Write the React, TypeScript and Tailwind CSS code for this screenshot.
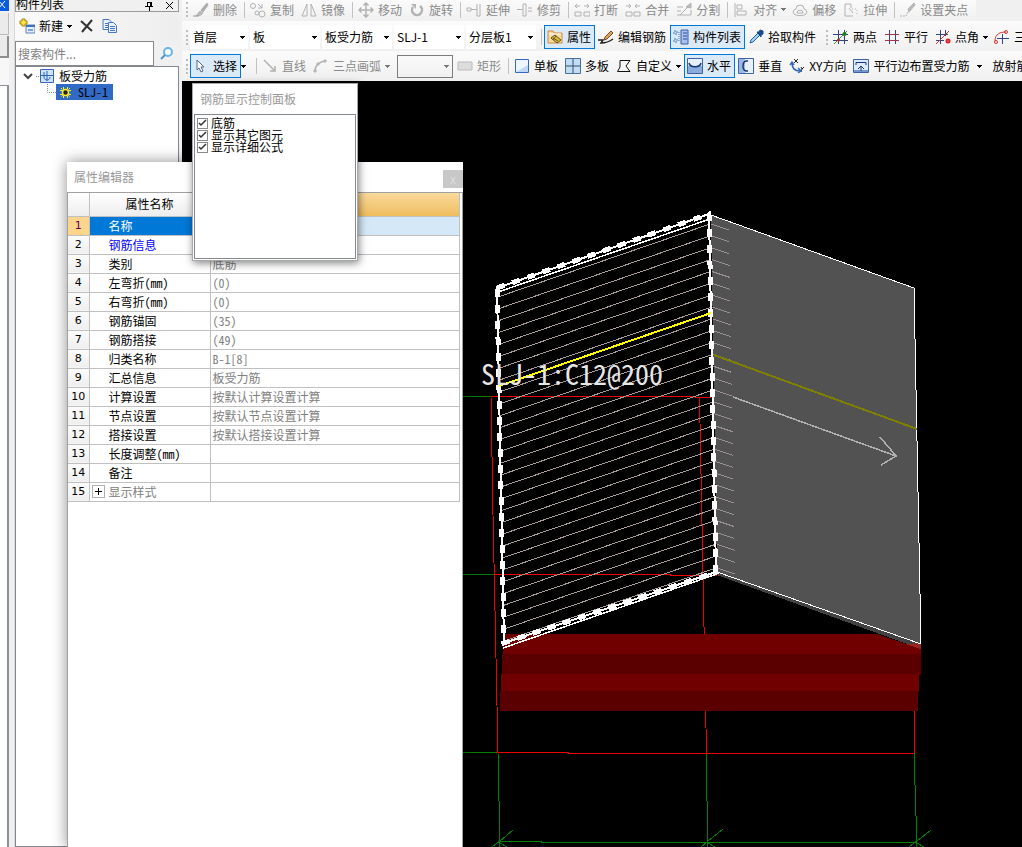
import { ReactNode } from 'react';

type IconName = keyof typeof icons;

const icons = {
    brush: <><path d="M14 1 8 8l2 2 5-7z" fill="#aaa" /><path d="m7 9-4 5 5-1 2-2z" fill="#bbb" /><path d="M0 14h6" stroke="#999" /></>,
    copyShape: <><circle cx="3" cy="4" r="2.500" /><circle cx="7" cy="11" r="2" /><circle cx="12" cy="12" r="3" /><path d="M8 2l4 4m0-4v4H8" /></>,
    mirror: <><path d="M6 2v12H1zM10 2v12h5z" /></>,
    move: <><path d="M8 1v14M1 8h14M5.500 3.500 8 1l2.500 2.500M5.500 12.500 8 15l2.500-2.500M3.500 5.500 1 8l2.500 2.500M12.500 5.500 15 8l-2.500 2.500" strokeWidth="1.500" /></>,
    rotate: <><path d="M4 5a5 5 0 1 0 7-1" strokeWidth="2.500" /><path d="M2 2h5v5z" fill="#b5b5b5" stroke="none" /></>,
    extend: <><path d="M1 6h4v3H1zM5 7.500h6M11 2v12h3V2" /></>,
    trim: <><path d="M6 2h3v12H6zM0 7.500h6M11 6h4M11 9h4" /></>,
    breakLine: <><path d="M1 10h6v4H1zM10 10h6v4h-6zM1 4h5M10 4h5M3 2 1 4l2 2M13 2l2 2-2 2" /></>,
    join: <><path d="M1 10h6v4H1zM9 10h6v4H9zM1 4h5M10 4h5M4 2l2 2-2 2M12 2l-2 2 2 2" /></>,
    split: <><path d="M1 5h6M1 9h4M1 13h14V8M4 13 15 2" /><path d="M10 5l5-4v5z" fill="#bbb" /></>,
    align: <><path d="M2 1v14M4 3h5v4H4zM4 9h9v4H4z" /></>,
    offset: <><path d="M2 12a3 3 0 0 1 2-5 4 4 0 0 1 8 0 3 3 0 0 1 2 5c-2 2-10 2-12 0zM5 11a3 3 0 1 1 6 0z" /></>,
    stretch: <><path d="M2 14V2h6v4M2 14h8" /><path d="M9 7h5v7" strokeDasharray="1 2" /><path d="M6 6l4 5" /></>,
    grip: <><path d="M14 1 8 7l1 3 6-7z" fill="#bbb" /><path d="M0 14h5m3-4-2 4" strokeDasharray="2 1" /></>,
    props: <><path d="M1 2h5l1 2h8v10H1z" fill="#f9d9a0" stroke="#d28a3a" /><path d="M2 5h12" stroke="#fff" /><path d="m4 9 4-3 6 5-4 3z" fill="#e3bd35" stroke="#5b5136" /><path d="m6 9 5 3M9 7l-3 4" stroke="#6b5a20" /></>,
    edit: <><path d="M0 11h5l-2 3c4 0 8-1 12-4" stroke="#222" strokeWidth="1.500" /><path d="m6 11 1-3 6-6 2 2-6 6z" fill="#dca45c" stroke="#7b4a25" /></>,
    list: <><path d="M8 1h7v14H8z" fill="#a9c1ec" stroke="#3a5da8" /><path d="M10 4h4M10 7h4M10 10h4" stroke="#2c4f96" /><path d="M1 2h3v3H1zM1 10h3v3H1z" stroke="#4b74b8" strokeDasharray="2 1" /><path d="M6 3v10" stroke="#4b74b8" strokeDasharray="1 1" /></>,
    picker: <><path d="m3 11 7-7 2 2-7 7-3 1z" fill="#a5cdf0" stroke="#2263a8" /><path d="M9 3l2 0 1-2 3 1v3l-2 1v2z" fill="#174b8e" stroke="#174b8e" /></>,
    twoPoint: <><path d="M5.500 1v14M11.500 1v14M0 5.500h15M0 11.500h15" stroke="#34457d" /><path d="M1 15 14 2" stroke="#3c9a3c" /><circle cx="11.500" cy="5" r="2" fill="#207c20" stroke="none" /><circle cx="5.500" cy="11" r="1.500" fill="#b22" stroke="none" /></>,
    parallel: <><path d="M5.500 1v14M11.500 1v14" stroke="#34457d" /><path d="M1 5.500h14M1 11.500h14" stroke="#a1344e" /></>,
    pointAngle: <><path d="M5.500 1v14M1 5.500h12M1 11.500h8M10.500 1v6" stroke="#34457d" /><path d="M1 15 14 2" stroke="#c33" /><circle cx="13" cy="12" r="1.500" stroke="#d22" strokeWidth="2" /></>,
    arcAxis: <><path d="M1 12C1 5 6 3 12 3" stroke="#d33" /><circle cx="12" cy="3" r="1.500" stroke="#d33" /><circle cx="2" cy="13" r="1.500" stroke="#d33" /><path d="M8.500 5v10M3 9.500h12" stroke="#34457d" /></>,
    cursor: <><path d="M4 2v10l2-2 2 4 2-1-2-4h3z" fill="#fff" stroke="#4f6496" /></>,
    line: <><path d="m2 2 11 11M13 8v5H8" strokeWidth="1.500" /></>,
    arc: <><path d="M2 13C2 7 7 3 13 3" strokeWidth="1.500" /><path d="M1 12h2v2H1zM4 5h2v2H4zM11 2h2v2h-2z" fill="#bbb" /></>,
    rect: <><path d="M1 4h14v8H1z" fill="#ddd" stroke="#bbb" /></>,
    singleSlab: <><path d="M1.500 1.500h13v13h-13z" fill="#edf5ff" stroke="#3669bd" /><path d="M2 14h12V7z" fill="#bcd8f6" stroke="none" /></>,
    multiSlab: <><path d="M.5.5h15v15H.5z" fill="#c3dcf5" stroke="#466f9b" /><path d="M8 1v14M1 8h14" stroke="#31506f" /></>,
    custom: <><path d="M4 2.500h10L10 8l4 5.500H1.500L4 9z" stroke="#111" /></>,
    horizontal: <><path d="M.5.5h15v15H.5z" fill="#8badde" stroke="#3d62a5" /><path d="M1 1h14v7H1z" fill="#e7f0fb" stroke="none" /><path d="M2 5c1 5 11 5 12 0" stroke="#173873" strokeWidth="1.500" /></>,
    vertical: <><path d="M.5.5h15v15H.5z" fill="#9ab9e5" stroke="#3d62a5" /><path d="M7 1h8v14H7z" fill="#e7f0fb" stroke="none" /><path d="M10 3H8C4 4 4 12 8 13h2" stroke="#173873" strokeWidth="1.500" /></>,
    xy: <><path d="M5 1l4 4M9 1 5 5M12 9l1 2 2-2M13 11l-1 3" stroke="#222" /><path d="M3 5c0 5 2 8 8 8M1 7l2-3 2 3M9 10l3 3-3 2" stroke="#3569bb" strokeWidth="1.500" /></>,
    edgeRebar: <><path d="M.5 1.500h15v13H.5z" fill="#dceafa" stroke="#3d62a5" /><path d="M1 12h14v2H1z" fill="#7298d1" stroke="none" /><path d="M3 7V4.500h10V7M8 13V8M5 11l3-3 3 3" stroke="#173873" /></>,
};

function Icon({ name }: { name: IconName }) {
    return (
        <svg className="h-4 w-4 shrink-0" viewBox="0 0 16 16" fill="none" stroke="#b2b2b2" aria-hidden="true">
            {icons[name]}
        </svg>
    );
}

function Caret({ className = 'text-black' }: { className?: string }) {
    return (
        <svg className={`h-[3px] w-[5px] shrink-0 ${className}`} viewBox="0 0 5 3" fill="currentColor" shapeRendering="crispEdges" aria-hidden="true">
            <path d="M0 0h5L2.500 3z" />
        </svg>
    );
}

interface ToolProps {
    icon?: IconName;
    label: string;
    disabled?: boolean;
    active?: boolean;
    arrow?: boolean;
}

function Tool({ icon, label, disabled, active, arrow }: ToolProps) {
    return (
        <>
            <button
                type="button"
                disabled={disabled}
                className={`flex h-6 shrink-0 items-center gap-1 border pr-[3px] pl-[2px] whitespace-nowrap ${active ? 'border-[#0078d7] bg-[#dbeaf7]' : 'border-transparent'} ${disabled ? 'text-[#8a8a8a]' : 'text-black'}`}
            >
                {icon && <Icon name={icon} />}
                {label}
            </button>
            {arrow && (
                <button type="button" disabled={disabled} aria-label={`${label}选项`} className="flex h-6 w-2 shrink-0 items-center">
                    <Caret className={disabled ? 'text-[#777]' : 'text-black'} />
                </button>
            )}
        </>
    );
}

function Separator() {
    return <span className="mr-[2px] ml-[3px] h-4 w-px shrink-0 bg-[#c2c2c2]" />;
}

function Grip() {
    return <span className="mr-[2px] ml-1 h-[15px] w-0 shrink-0 border-l-2 border-dotted border-[#bdbdbd]" />;
}

function Combo({ label, value, className }: { label: string; value: string; className: string }) {
    return (
        <div className={`relative flex h-6 shrink-0 items-center bg-white ${className}`}>
            <select aria-label={label} className="h-full w-full appearance-none bg-transparent px-[3px] text-black outline-none">
                <option>{value}</option>
            </select>
            <span className="pointer-events-none absolute right-[3px]">
                <Caret />
            </span>
        </div>
    );
}

const bar = 'flex shrink-0 items-center bg-gradient-to-b from-[#fbfbfb] to-[#f0f0f0]';

function Toolbars() {
    return (
        <div className="flex shrink-0 flex-col overflow-hidden bg-[#f0f0f0]">
            <div className="flex h-[21px] items-center">
                <div className={`${bar} h-[21px] pr-1 pb-[2px]`}>
                    <Grip />
                    <Tool icon="brush" label="删除" disabled />
                    <Separator />
                    <Tool icon="copyShape" label="复制" disabled />
                    <Tool icon="mirror" label="镜像" disabled />
                    <Separator />
                    <Tool icon="move" label="移动" disabled />
                    <Tool icon="rotate" label="旋转" disabled />
                    <Separator />
                    <Tool icon="extend" label="延伸" disabled />
                    <Tool icon="trim" label="修剪" disabled />
                    <Separator />
                    <Tool icon="breakLine" label="打断" disabled />
                    <Tool icon="join" label="合并" disabled />
                    <Tool icon="split" label="分割" disabled />
                    <Separator />
                    <Tool icon="align" label="对齐" disabled arrow />
                    <Tool icon="offset" label="偏移" disabled />
                    <Tool icon="stretch" label="拉伸" disabled />
                    <Separator />
                    <Tool icon="grip" label="设置夹点" disabled />
                </div>
            </div>
            <div className={`${bar} h-[30px] pt-[2px]`}>
                <Grip />
                <div className="mr-[2px] flex shrink-0 gap-[2px]">
                    <Combo label="楼层" value="首层" className="w-[58px]" />
                    <Combo label="构件类别" value="板" className="w-[70px]" />
                    <Combo label="构件类型" value="板受力筋" className="w-[70px]" />
                    <Combo label="构件" value="SLJ-1" className="w-[70px]" />
                    <Combo label="分层" value="分层板1" className="w-[70px]" />
                </div>
                <Separator />
                <Tool icon="props" label="属性" active />
                <Tool icon="edit" label="编辑钢筋" />
                <Tool icon="list" label="构件列表" active />
                <Tool icon="picker" label="拾取构件" />
                <span className="w-[2px] shrink-0" />
                <Grip />
                <Tool icon="twoPoint" label="两点" />
                <Tool icon="parallel" label="平行" />
                <Tool icon="pointAngle" label="点角" arrow />
                <Tool icon="arcAxis" label="三点辅轴" />
            </div>
            <div className={`${bar} h-[30px]`}>
                <Grip />
                <Tool icon="cursor" label="选择" active arrow />
                <span className="w-1 shrink-0" />
                <Separator />
                <Tool icon="line" label="直线" disabled />
                <Tool icon="arc" label="三点画弧" disabled arrow />
                <div className="relative ml-1 flex h-[23px] w-14 shrink-0 items-center border border-[#7c7c7c]">
                    <select aria-label="画法" disabled className="h-full w-full appearance-none bg-transparent" />
                    <span className="pointer-events-none absolute right-[3px]">
                        <Caret className="text-[#777]" />
                    </span>
                </div>
                <span className="w-px shrink-0" />
                <Tool icon="rect" label="矩形" disabled />
                <Separator />
                <Tool icon="singleSlab" label="单板" />
                <Tool icon="multiSlab" label="多板" />
                <Tool icon="custom" label="自定义" arrow />
                <Tool icon="horizontal" label="水平" active />
                <Tool icon="vertical" label="垂直" />
                <Tool icon="xy" label="XY方向" />
                <Tool icon="edgeRebar" label="平行边布置受力筋" />
                <span className="flex w-4 shrink-0 items-center pl-1">
                    <Caret />
                </span>
                <Tool label="放射筋" />
            </div>
        </div>
    );
}

function DockStrip() {
    return (
        <div className="flex w-[9px] shrink-0 flex-col bg-[#f0f0f0]">
            <div className="flex h-[11px] items-start bg-[#0a5be0]">
                <svg className="h-[11px] w-[9px]" viewBox="0 0 9 11" fill="none" stroke="#fff" aria-hidden="true">
                    <path d="M-1 1l6 7M5 1l-6 7" />
                </svg>
            </div>
            <div className="mt-[2px] h-[22px] border-r border-b border-[#bbb] bg-[#ebebeb]" />
            <div className="mt-px h-[22px] border-r-2 border-b-2 border-[#8d8d8d] bg-[#ebebeb]" />
            <div className="h-[27px] bg-[#f7f7f7]" />
            <div className="flex-1 border-t border-r-2 border-[#8d9094] bg-white" />
        </div>
    );
}

function ComponentList() {
    return (
        <aside className="flex w-[164px] shrink-0 flex-col bg-[#f0f0f0]">
            <div className="flex h-3 items-center justify-between overflow-hidden border-x border-b border-[#9a9a9a] text-black">
                <h2 className="-mt-1 leading-3">构件列表</h2>
                <div className="flex gap-3 pr-1">
                    <svg className="h-[10px] w-[8px]" viewBox="0 0 8 10" fill="none" stroke="#000" shapeRendering="crispEdges" aria-hidden="true">
                        <path d="M2 5V1h4v4M5 1v4M0 5.500h8M4 6v4" />
                    </svg>
                    <svg className="h-[10px] w-[9px]" viewBox="0 0 9 10" fill="none" stroke="#000" aria-hidden="true">
                        <path d="m1 1 7 7M8 1 1 8" />
                    </svg>
                </div>
            </div>
            <div className="flex h-7 items-center bg-gradient-to-r from-[#fafafa] to-[#eeeeee] px-1">
                <button type="button" className="flex items-center gap-1">
                    <svg className="h-4 w-4" viewBox="0 0 16 16" fill="none" aria-hidden="true">
                        <path d="M7 7h9v8H7z" fill="#e3eefb" stroke="#5d84bb" />
                        <path d="M7 8h9" stroke="#3d72c0" strokeWidth="2" />
                        <path d="M9 12h5" stroke="#7ea2d2" strokeWidth="2" />
                        <path d="M3 1h3v2h2v3H6v2H3V6H1V3h2z" fill="#ffe14d" stroke="#a88700" />
                    </svg>
                    <span>新建</span>
                    <Caret />
                </button>
                <button type="button" aria-label="删除" className="ml-[7px]">
                    <svg className="h-4 w-4" viewBox="0 0 16 16" fill="none" stroke="#333" strokeWidth="2" aria-hidden="true">
                        <path d="m2 3 11 10M13 2 3 14" />
                    </svg>
                </button>
                <button type="button" aria-label="复制" className="ml-[7px]">
                    <svg className="h-4 w-4" viewBox="0 0 16 16" fill="#e8f1fc" stroke="#4777bd" aria-hidden="true">
                        <path d="M1 1.500h6l2 2v8H1zM3 5.500h4M3 7.500h4M3 9.500h4" />
                        <path d="M6.500 4.500h5l3 3v7h-8zM8 8.500h5M8 10.500h5M8 12.500h5" />
                    </svg>
                </button>
            </div>
            <div className="flex h-[26px] items-center">
                <input
                    aria-label="搜索构件"
                    placeholder="搜索构件..."
                    className="h-[25px] w-[139px] border border-[#8a8a8a] bg-white px-[2px] outline-none placeholder:text-[#808080]"
                />
                <button type="button" aria-label="搜索" className="flex flex-1 justify-center">
                    <svg className="h-4 w-4" viewBox="0 0 16 16" fill="none" stroke="#6bb5e6" strokeWidth="2" aria-hidden="true">
                        <circle cx="9" cy="7" r="4" fill="#f4fbff" />
                        <path d="m6 10-4 4" stroke="#4f93d0" />
                    </svg>
                </button>
            </div>
            <ul className="flex-1 border border-[#828790] bg-white pt-px text-black">
                <li>
                    <div className="flex h-4 items-center pl-[6px]">
                        <svg className="h-4 w-[18px]" viewBox="0 0 18 16" fill="none" aria-hidden="true">
                            <path d="m2 6 4 4 4-4" stroke="#444" strokeWidth="2" />
                            <path d="M14 8.500h4" stroke="#888" strokeDasharray="1 1" />
                        </svg>
                        <svg className="h-[14px] w-[14px]" viewBox="0 0 14 14" fill="none" aria-hidden="true">
                            <path d="M.5.5h13v13H.5z" fill="#cfe3fa" stroke="#3565b5" />
                            <path d="M1 6.500h12M7 2v10M4 3v5c0 4 6 4 6 0" stroke="#2a62bd" />
                        </svg>
                        <span className="ml-[5px]">板受力筋</span>
                    </div>
                    <ul>
                        <li className="flex h-4 items-center pl-[31px]">
                            <svg className="h-4 w-[9px]" viewBox="0 0 9 16" fill="none" stroke="#888" strokeDasharray="1 1" aria-hidden="true">
                                <path d="M.5 0v8.500H9" />
                            </svg>
                            <span className="flex h-4 w-[57px] items-center gap-[7px] bg-[#316ac5] pl-1 leading-4">
                                <svg className="h-[11px] w-[11px]" viewBox="0 0 11 11" fill="none" stroke="#ffee22" aria-hidden="true">
                                    <path d="M3.500 0v11M7.500 0v11M0 3.500h11M0 7.500h11M1 1l9 9M10 1l-9 9" strokeDasharray="2 1" />
                                    <circle cx="5.500" cy="5.500" r="3" fill="#222" strokeWidth="1.500" />
                                </svg>
                                <span className="[font-feature-settings:'hwid']">SLJ-1</span>
                            </span>
                        </li>
                    </ul>
                </li>
            </ul>
        </aside>
    );
}

// rebar strands are evenly spaced between the top and bottom edge of each wall
const strands = Array.from({ length: 30 }, (_, i) => i);
const red = '#f00000';
const green = '#008000';

function ModelView() {
    return (
        <svg className="block w-full" viewBox="182 81 840 766" fill="none" role="img" aria-label="三维视图" shapeRendering="crispEdges">
            <path d="M463 396.500h28M463 574.500h32M463 752.500h35M498 753l2 94M706 753l2 94M914 753l3 94M500 841.500h42M541 842.500h376" stroke={green} />
            <path d="m500 841 13-11m-13 11-8 6m8-4 7 4M708 841l15-12m-15 12-7 6m7-4 7 4M917 841l14-11m-14 11-8 6m8-4 7 4" stroke={green} />
            <path d="m711 215 203 73 7 356-204-71z" fill="#525252" />
            <path d="m717 572 204 72v5l-204-74z" fill="#424242" />
            <path d="M491 396.500h188l32 1M491 397l2 118 5 238M495 574.500h129l93 1M699.500 397l7 356M914 660v93M498 752.500h70v1h346" stroke={red} />
            <path d="M503 634h374l44 15v6H503z" fill="#700000" />
            <path d="M502 654h419v21H502z" fill="#5a0000" />
            <path d="M501 674h418v18H501z" fill="#700000" />
            <path d="M500 691h418v20H500z" fill="#5a0000" />
            <path d="m905 644 16-1v6z" fill="#942525" />
            {strands.map((i) => {
                const y = (i * 344) / 29;
                const drift = (i * 6) / 29;
                return (
                    <g key={i}>
                        <path d={`M${498 + drift} ${297 + y} L${710 + drift} ${224 + y}`} stroke="#a89c98" />
                        <path d={`M${711 + drift} ${224 + y} l18 6`} stroke="#9a9090" />
                    </g>
                );
            })}
            <path d="m711 215 203 73 7 356-204-72" stroke="#fff" />
            <path d="m498 292 212-73M503 648l214-74" stroke="#fff" strokeWidth="1.500" />
            <path d="M497 288 709 214l7 358-212 71z" stroke="#fff" strokeWidth="2" />
            <path d="M497 288 709 214l7 358-212 71z" stroke="#fff" strokeWidth="5" strokeDasharray="8 8" />
            <path d="m499 386 212-73" stroke="#ff0" strokeWidth="2" />
            <path d="m714 355 203 74" stroke="#808000" strokeWidth="2" />
            <path d="m733 397 163 59M880 437l16 19-15 9" stroke="#b0b0b0" strokeWidth="1.500" />
            <text x="481" y="385" fontSize="28" fill="#e6e6e6" className="[font-feature-settings:'hwid']">SLJ-1:C12@200</text>
        </svg>
    );
}

interface Property {
    name: string;
    value: string;
    nameClass?: string;
}

const properties: Property[] = [
    { name: '名称', value: 'SLJ-1' },
    { name: '钢筋信息', value: 'C12@200', nameClass: 'text-[#0000ff]' },
    { name: '类别', value: '底筋' },
    { name: '左弯折(mm)', value: '(0)' },
    { name: '右弯折(mm)', value: '(0)' },
    { name: '钢筋锚固', value: '(35)' },
    { name: '钢筋搭接', value: '(49)' },
    { name: '归类名称', value: 'B-1[8]' },
    { name: '汇总信息', value: '板受力筋' },
    { name: '计算设置', value: '按默认计算设置计算' },
    { name: '节点设置', value: '按默认节点设置计算' },
    { name: '搭接设置', value: '按默认搭接设置计算' },
    { name: '长度调整(mm)', value: '' },
    { name: '备注', value: '' },
    { name: '显示样式', value: '', nameClass: 'text-[#808080]' },
];

function PropertyEditor() {
    return (
        <section className="absolute top-[162px] bottom-0 left-[67px] flex w-[396px] flex-col bg-white shadow-[0_0_14px_rgba(0,0,0,0.45)]">
            <header className="flex h-[30px] shrink-0 items-center justify-between pl-[7px] text-[#999]">
                <h2>属性编辑器</h2>
                <button type="button" aria-label="关闭" className="mt-1 h-[18px] w-5 bg-[#c8c8c8] leading-3 text-[#ddd]">
                    x
                </button>
            </header>
            <div className="flex-1 border border-b-0 border-[#a0a0a0]">
                <table className="w-[392px] table-fixed border-collapse [font-feature-settings:'hwid']">
                    <colgroup>
                        <col className="w-[21px]" />
                        <col className="w-[121px]" />
                        <col />
                    </colgroup>
                    <thead>
                        <tr className="h-[23px]">
                            <th className="border-r border-b border-[#c0c0c0] bg-gradient-to-b from-white to-[#ededed]" />
                            <th className="border-r border-b border-[#c0c0c0] bg-gradient-to-b from-white to-[#ededed] font-normal text-black">属性名称</th>
                            <th className="border-r border-b border-[#c0c0c0] bg-gradient-to-b from-[#f9d99b] to-[#efbd5c] font-normal text-black">属性值</th>
                        </tr>
                    </thead>
                    <tbody>
                        {properties.map((property, index) => {
                            const selected = index === 0;
                            const last = index === properties.length - 1;
                            return (
                                <tr key={property.name} className="h-[19px]">
                                    <td className={`border-r border-b border-[#c0c0c0] p-0 text-center font-['DejaVu_Sans'] text-[11px] leading-4 ${selected ? 'bg-[#ffd58c] text-[#600060]' : 'bg-gradient-to-b from-[#fcfcfc] to-[#eeeeee] text-black'}`}>
                                        {index + 1}
                                    </td>
                                    <td className={`border-r border-b border-[#c0c0c0] p-0 leading-4 ${selected ? 'bg-[#0078d7] text-white' : property.nameClass || 'text-black'}`}>
                                        <div className={`flex items-center ${last ? 'gap-1 pl-[2px]' : 'pl-[19px]'}`}>
                                            {last && (
                                                <button type="button" aria-label="展开" className="flex h-[13px] w-[13px] items-center justify-center border border-[#b0b0b0] text-black">
                                                    <svg className="h-[7px] w-[7px]" viewBox="0 0 7 7" stroke="currentColor" aria-hidden="true">
                                                        <path d="M0 3.500h7M3.500 0v7" />
                                                    </svg>
                                                </button>
                                            )}
                                            {property.name}
                                        </div>
                                    </td>
                                    <td className={`border-r border-b border-[#c0c0c0] p-0 pl-[2px] leading-4 text-[#808080] ${selected ? 'bg-[#d5e8f8]' : ''}`}>
                                        {property.value}
                                    </td>
                                </tr>
                            );
                        })}
                    </tbody>
                </table>
            </div>
        </section>
    );
}

function FloatingPanel({ title, children }: { title: string; children: ReactNode }) {
    return (
        <section className="absolute top-[83px] left-[192px] flex h-[178px] w-[166px] flex-col border border-[#a8a8a8] bg-white shadow-[1px_2px_8px_rgba(0,0,0,0.5)]">
            <h2 className="flex h-[29px] shrink-0 items-center pl-[7px] text-[#999]">{title}</h2>
            <div className="m-px flex-1 border border-[#828790] pt-[2px] pl-[2px]">{children}</div>
        </section>
    );
}

function DisplayOption({ label }: { label: string }) {
    return (
        <label className="flex h-3 items-center gap-[3px] leading-3 text-black">
            <input
                type="checkbox"
                defaultChecked
                className="h-[11px] w-[11px] shrink-0 appearance-none border border-[#8a8a8a] bg-white bg-center bg-no-repeat checked:bg-[url('data:image/svg+xml,%3Csvg%20xmlns=%22http://www.w3.org/2000/svg%22%20width=%229%22%20height=%229%22%3E%3Cpath%20d=%22m1%204%202%202%205-5%22%20fill=%22none%22%20stroke=%22%23333%22%20stroke-width=%221.500%22/%3E%3C/svg%3E')]"
            />
            {label}
        </label>
    );
}

export default function App() {
    return (
        <div className="relative flex h-screen overflow-hidden bg-[#f0f0f0] font-['Noto_Sans_CJK_SC',sans-serif] text-[12px] leading-4 select-none">
            <DockStrip />
            <div className="w-[6px] shrink-0 border-r border-[#d8d8d8] bg-[#f0f0f0]" />
            <ComponentList />
            <main className="ml-[3px] flex min-w-0 flex-1 flex-col bg-black">
                <Toolbars />
                <div className="min-h-0 flex-1 overflow-hidden">
                    <ModelView />
                </div>
            </main>
            <PropertyEditor />
            <FloatingPanel title="钢筋显示控制面板">
                <DisplayOption label="底筋" />
                <DisplayOption label="显示其它图元" />
                <DisplayOption label="显示详细公式" />
            </FloatingPanel>
        </div>
    );
}
